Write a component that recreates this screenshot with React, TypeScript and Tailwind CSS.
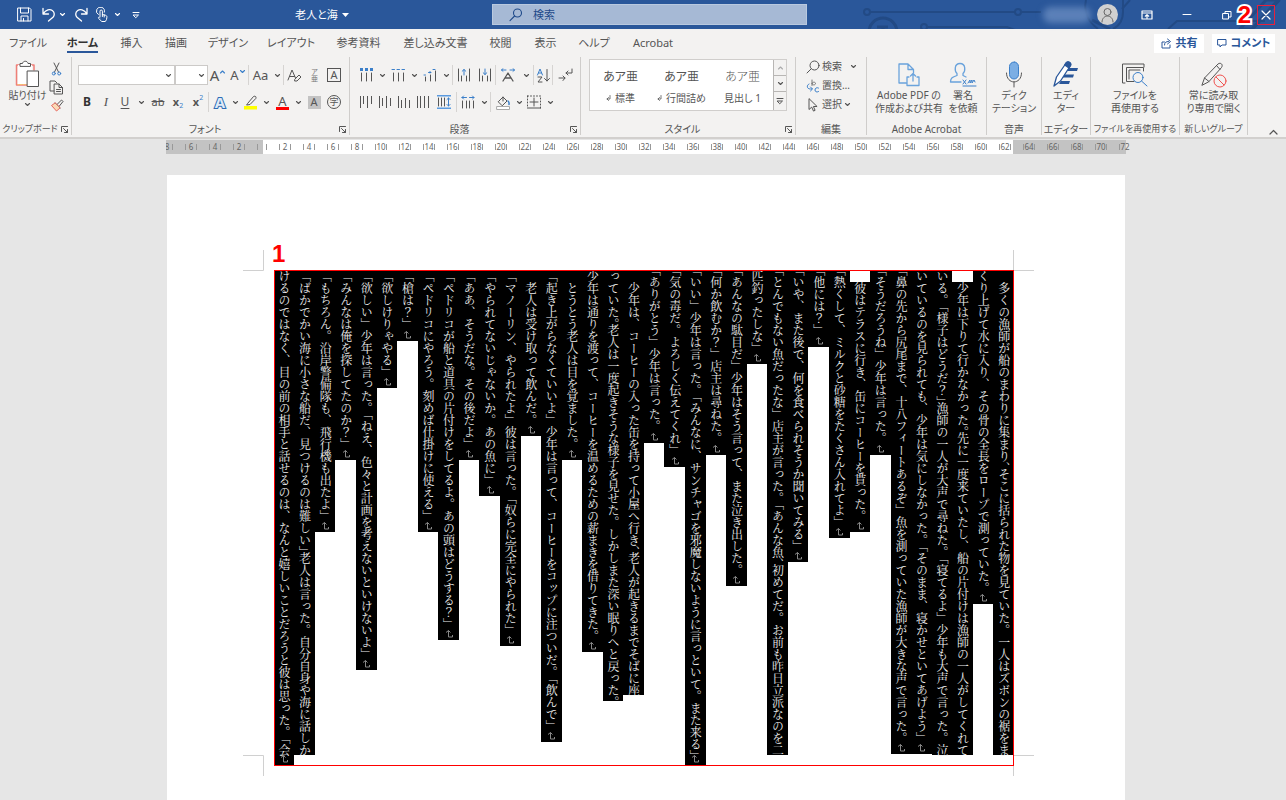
import type { ReactNode } from "react";

type Column = { text: string; end: number; mark?: boolean; gap?: boolean; trim?: boolean };

const TOP = 270;

const columns: Column[] = [
  { text: "　多くの漁師が船のまわりに集まり、~そこに括られた物を見ていた。一人はズボンの裾をま", end: 755 },
  { text: "くり上げて水に入り、その骨の全長をロープで測っていた。", end: 604, mark: true },
  { text: "少年は下りて行かなかった。~先に一度来ていたし、船の片付けは漁師の一人がしてくれて", end: 755, gap: true },
  { text: "いる。「様子はどうだ？」~漁師の一人が大声で尋ねた。「寝てるよ」少年も大声で言った。泣", end: 755 },
  { text: "いているのを見られても、少年は気にしなかった。「そのまま、寝かせといてあげよう」", end: 754, mark: true },
  { text: "「鼻の先から尻尾まで、十八フィートあるぞ」魚を測っていた漁師が大きな声で言った。", end: 754, mark: true, trim: true },
  { text: "「そうだろうね」少年は言った。", end: 455, mark: true, trim: true },
  { text: "彼はテラスに行き、缶にコーヒーを貰った。", end: 532, mark: true, gap: true },
  { text: "「熱くして、ミルクと砂糖をたくさん入れてよ」", end: 538, mark: true, trim: true },
  { text: "「他には？」", end: 347, mark: true, trim: true },
  { text: "「いや、また後で、何を食べられそうか聞いてみる」", end: 562, mark: true, trim: true },
  { text: "「とんでもない魚だったな」店主が言った。「あんな魚、~初めてだ。お前も昨日立派なのを二", end: 755, trim: true },
  { text: "匹釣ったしな」", end: 364, mark: true },
  { text: "「あんなの駄目だ」少年はそう言って、また泣き出した。", end: 586, mark: true, trim: true },
  { text: "「何か飲むか？」店主は尋ねた。", end: 455, mark: true, trim: true },
  { text: "「いい」少年は言った。「みんなに、サンチャゴを邪魔しないように言っといて。また来る」", end: 765, mark: true, trim: true },
  { text: "「気の毒だ。よろしく伝えてくれ」", end: 467, mark: true, trim: true },
  { text: "「ありがとう」少年は言った。", end: 443, mark: true, trim: true },
  { text: "　少年は、コーヒーの入った缶を持って小屋へ行き、~老人が起きるまでそばに座", end: 695 },
  { text: "っていた。~老人は一度起きそうな様子を見せた。しかしまた深い眠りへと戻った。", end: 701 },
  { text: "少年は通りを渡って、コーヒーを温めるための薪まきを借りてきた。", end: 652, mark: true },
  { text: "　とうとう老人は目を覚ました。", end: 460, mark: true },
  { text: "「起き上がらなくていいよ」少年は言って、コーヒーをコップに注ついだ。「飲んで」", end: 742, mark: true },
  { text: "　老人は受け取って飲んだ。", end: 436, mark: true },
  { text: "「マノーリン、やられたよ」彼は言った。「奴らに完全にやられた」", end: 646, mark: true },
  { text: "「やられてないじゃないか。あの魚に」", end: 496, mark: true },
  { text: "「ああ、そうだな。その後だよ」", end: 460, mark: true },
  { text: "「ペドリコが船と道具の片付けをしてるよ。あの頭はどうする？」", end: 640, mark: true },
  { text: "「ペドリコにやろう。刻めば仕掛けに使える」", end: 532, mark: true },
  { text: "「槍は？」", end: 341, mark: true },
  { text: "「欲しけりゃやる」", end: 388, mark: true },
  { text: "「欲しい」少年は言った。「ねえ、色々と計画を考えないといけないよ」", end: 670, mark: true },
  { text: "「みんなは俺を探してたのか？」", end: 460, mark: true },
  { text: "「もちろん。沿岸警備隊も、飛行機も出たよ」", end: 532, mark: true },
  { text: "「ばかでかい海に小さな船だ、見つけるのは難しい」~老人は言った。自分自身や海に話しか", end: 755 },
  { text: "けるのではなく、目の前の相手と話せるのは、なんと嬉しいことだろうと彼は思った。「会", end: 765, mark: true },
];

const tabs = [
  { label: "ファイル", w: "w-[56px]" },
  { label: "ホーム", w: "w-[53px]", active: true },
  { label: "挿入", w: "w-[45px]" },
  { label: "描画", w: "w-[44px]" },
  { label: "デザイン", w: "w-[60px]" },
  { label: "レイアウト", w: "w-[66px]" },
  { label: "参考資料", w: "w-[69px]" },
  { label: "差し込み文書", w: "w-[85px]" },
  { label: "校閲", w: "w-[45px]" },
  { label: "表示", w: "w-[45px]" },
  { label: "ヘルプ", w: "w-[52px]" },
  { label: "Acrobat", w: "w-[66px]" },
];

const rulerNumbers = [8, 6, 4, 2, 0, ...Array.from({ length: 36 }, (_, i) => (i + 1) * 2)];

const INK = "#555";
const BLUE = "#3b7fc9";

function Icon({ w, h, children, color = INK, sw = 1 }: { w: number; h: number; children: ReactNode; color?: string; sw?: number }) {
  return (
    <svg aria-hidden="true" className="shrink-0" width={w} height={h} viewBox={`0 0 ${w} ${h}`} fill="none" stroke={color} strokeWidth={sw} strokeLinecap="round" strokeLinejoin="round">
      {children}
    </svg>
  );
}

function Chevron({ color = INK, up = false }: { color?: string; up?: boolean }) {
  return (
    <Icon w={7} h={5} color={color} sw={1.1}>
      <path d={up ? "M1.5 4 3.5 2l2 2" : "M1.5 1.5l2 2 2-2"} />
    </Icon>
  );
}

function Tool({ label, w, sep, children }: { label: string; w: string; sep?: boolean; children: ReactNode }) {
  return (
    <button type="button" aria-label={label} className={`flex h-5 shrink-0 items-center justify-center ${w} ${sep ? "border-l border-[#d6d4d2]" : ""}`}>
      {children}
    </button>
  );
}

function DropTool({ label, w, iconW, sep, children }: { label: string; w: string; iconW: string; sep?: boolean; children: ReactNode }) {
  return (
    <button type="button" aria-label={label} className={`flex h-5 shrink-0 items-center ${w} ${sep ? "border-l border-[#d6d4d2]" : ""}`}>
      <span className={`flex shrink-0 items-center justify-center ${iconW}`}>{children}</span>
      <span className="flex grow justify-center">
        <Chevron />
      </span>
    </button>
  );
}

function Group({ title, w, launcher, tight, children }: { title: string; w: string; launcher?: boolean; tight?: boolean; children: ReactNode }) {
  return (
    <section aria-label={title} className={`flex shrink-0 flex-col border-r border-[#cfcdcb] ${w}`}>
      <div className="h-0 grow">{children}</div>
      <div className={`flex h-3 items-center leading-3 ${tight ? "text-[9px]" : "text-[10px]"}`}>
        <span className="flex grow basis-0 justify-center whitespace-nowrap">{title}</span>
        {launcher && (
          <button type="button" aria-label={`${title}の詳細`} className="mr-0.5 shrink-0">
            <Icon w={9} h={9}>
              <path d="M1.500 6.500v-5h6M3.500 3.500l4 4M7.500 4.500v3h-3" />
            </Icon>
          </button>
        )}
      </div>
    </section>
  );
}

function BigButton({ lines, w, children }: { lines: string[]; w: string; children: ReactNode }) {
  return (
    <button type="button" className={`flex shrink-0 flex-col items-center ${w}`}>
      <span className="flex h-[30px] items-center justify-center">{children}</span>
      {lines.map((l) => (
        <span key={l} className="text-[10px] leading-[13px] whitespace-nowrap">
          {l}
        </span>
      ))}
    </button>
  );
}

function TitleBar() {
  return (
    <header className="relative grid h-[29px] grid-cols-[492fr_315fr_479fr] items-center bg-[#2a579a] text-white">
      <svg aria-hidden="true" className="absolute top-0 right-0" width="426" height="29" fill="none" stroke="#224a85" strokeWidth="2">
        <circle cx="7" cy="12" r="3" />
        <path d="M10 12h145" />
        <circle cx="158" cy="12" r="3" />
        <path d="M161 12h20" />
        <circle cx="23" cy="32" r="14" strokeWidth="3" />
        <path d="M17 27h11M23 27v3" strokeWidth="3" />
        <circle cx="64" cy="27" r="3" />
        <path d="M67 27h80l8 3M308 29l9-8h88M263 0v12c0 9-4 14-10 17M226 0c-3 14 3 22 12 29M270 0l-8 9M420 0l-26 28" />
        <path d="M232 20l18 9M406 0l12 0-26 29h-12z" strokeWidth="3" />
      </svg>
      <div className="relative flex items-center">
        <button type="button" aria-label="上書き保存" className="ml-[15px] flex w-[18px] justify-center">
          <Icon w={15} h={15} color="#fff">
            <path d="M1 1h11.500l1.500 1.500V14H1zM3.500 1v5h8V1M4 14V9h7v5M6.500 11.500V14" />
          </Icon>
        </button>
        <button type="button" aria-label="元に戻す" className="ml-2 flex items-center gap-[3px]">
          <Icon w={15} h={15} color="#fff" sw={1.3}>
            <path d="M2 1.500V7h5.500M2.200 6.600C5 2.500 9 1.800 11.300 3.500c2.700 2 2.300 5 .7 6.700L7.500 14" />
          </Icon>
          <Chevron color="#fff" />
        </button>
        <button type="button" aria-label="やり直し" className="ml-2 flex">
          <Icon w={15} h={15} color="#fff" sw={1.3}>
            <path d="M13 1.500V7H7.500M12.800 6.600C10 2.500 6 1.800 3.700 3.500 1 5.500 1.400 8.500 3 10.200L7.500 14" />
          </Icon>
        </button>
        <button type="button" aria-label="タッチ/マウス モードの切り替え" className="ml-1.5 flex items-center gap-[5px]">
          <Icon w={14} h={15} color="#fff">
            <path d="M3.300 7.500a4 4 0 1 1 6-2.300M5 9.500V4.200a1.200 1.200 0 0 1 2.400 0v3.300l3 .7c1.200.3 1.600 1 1.500 2l-.4 2.300-1.200 2H6.800L3.500 11.300c-.5-1 .5-1.700 1.500-.8M7.400 7.500v2M9.200 8v2" />
          </Icon>
          <Chevron color="#fff" />
        </button>
        <button type="button" aria-label="クイック アクセス ツール バーのユーザー設定" className="ml-[11px] flex">
          <Icon w={8} h={8} color="#fff">
            <path d="M1 1.500h6M1.500 4h5L4 6.500z" />
          </Icon>
        </button>
        <button type="button" className="ml-[155px] flex items-center gap-1 text-[11px] leading-4 whitespace-nowrap">
          老人と海
          <svg aria-hidden="true" width="7" height="4">
            <path d="M0 0h7L3.500 4z" fill="#fff" />
          </svg>
        </button>
      </div>
      <div className="relative flex h-[21px] items-center gap-2.5 border border-[#b9c9df] bg-[#a6b9d5] pl-4 text-[#1f4a8a]">
        <Icon w={14} h={14} color="#1f4a8a" sw={1.1}>
          <circle cx="8.500" cy="5" r="4" />
          <path d="M5.600 8 1 12.600" />
        </Icon>
        <input type="search" aria-label="検索" placeholder="検索" className="h-full min-w-0 grow bg-transparent text-[11px] leading-4 outline-none placeholder:text-[#1f4a8a]" />
      </div>
      <div className="relative flex items-center justify-end">
        <span className="mr-1.5 h-4 w-12 rounded-full bg-[#5b80b8] blur-[3px]" />
        <span className="mr-[9px] flex size-[21px] items-center justify-center rounded-full bg-[#d0d0d0]">
          <Icon w={15} h={16} color="#666">
            <circle cx="7.500" cy="5" r="3.500" />
            <path d="M2 15c0-8 11-8 11 0" />
          </Icon>
        </span>
        <button type="button" aria-label="リボンの表示オプション" className="flex w-10 justify-center">
          <Icon w={12} h={10} color="#fff" sw={1.2}>
            <path d="M1 1h10v8H1zM1 3h10M6 8V4.800M4.300 6.200 6 4.600l1.700 1.600" />
          </Icon>
        </button>
        <button type="button" aria-label="最小化" className="flex w-10 justify-center">
          <Icon w={10} h={3} color="#fff">
            <path d="M1 1.500h8" />
          </Icon>
        </button>
        <button type="button" aria-label="元に戻す(縮小)" className="relative flex w-[39px] justify-center">
          <Icon w={10} h={10} color="#fff">
            <path d="M1 3.500h5.500V9H1zM3 3.500V1.500h6V7H6.500" />
          </Icon>
        </button>
        <button type="button" aria-label="閉じる" className="flex w-10 justify-center">
          <span className="flex h-5 w-[18px] items-center justify-center border border-[#e8203c]">
            <Icon w={10} h={10} color="#fff" sw={1.2}>
              <path d="M1 1l8 8M9 1 1 9" />
            </Icon>
          </span>
        </button>
        <span className="absolute right-[35px] font-[Liberation_Sans] text-2xl leading-6 font-bold text-[#f00] [paint-order:stroke] [-webkit-text-stroke:4px_white]">2</span>
      </div>
    </header>
  );
}

function TabBar() {
  return (
    <nav aria-label="リボン タブ" className="flex h-7 items-center">
      {tabs.map((t) => (
        <button key={t.label} type="button" className={`flex shrink-0 flex-col items-center text-[11px] leading-4 whitespace-nowrap ${t.w} ${t.active ? "font-bold text-[#333]" : ""}`}>
          <span className={t.active ? "border-b-2 border-[#2a579a] pt-0.5" : ""}>{t.label}</span>
        </button>
      ))}
      <div className="ml-auto flex gap-2 pr-[11px] text-[11px] leading-4 font-bold whitespace-nowrap text-[#2a579a]">
        <button type="button" className="flex h-[19px] w-[50px] items-center justify-center gap-1 bg-white">
          <Icon w={11} h={11} color="#2a579a">
            <path d="M3.500 4H1v6h8V7M3.500 7c0-2.500 1.500-3.500 4-3.500M6.500 1l3 2.500-3 2.500" />
          </Icon>
          共有
        </button>
        <button type="button" className="flex h-[19px] w-[63px] items-center justify-center gap-1 bg-white">
          <Icon w={10} h={10} color="#2a579a">
            <path d="M1 1.500h8V7H5L3 9V7H1z" />
          </Icon>
          コメント
        </button>
      </div>
    </nav>
  );
}

function Bars({ spans }: { spans: number[][] }) {
  return (
    <Icon w={14} h={14}>
      {spans.map(([x, a, b]) => (
        <path key={x} d={`M${x + 0.5} ${a}V${b}`} strokeLinecap="butt" />
      ))}
    </Icon>
  );
}

function ClipboardGroup() {
  return (
    <Group title="クリップボード" w="w-[72px]" launcher tight>
      <div className="flex pt-[3px]">
        <button type="button" className="flex w-[49px] shrink-0 flex-col items-center pl-1.5 text-[10px] leading-[14px] whitespace-nowrap">
          <Icon w={25} h={28}>
            <path d="M4.500 5H1.500v20H12" stroke="#ef7f78" strokeWidth="1.500" />
            <path d="M16 5h3v5" stroke="#ef7f78" strokeWidth="1.500" />
            <path d="M3 5h14v5h-5v14H3z" fill="#fff" stroke="none" />
            <path d="M3 24.500h8" stroke="#f7c46c" strokeDasharray="1 1.500" />
            <path d="M5 6V3.500h2.500c.5-3 5-3 5.500 0h2.500V6z" fill="#fff" />
            <path d="M12.500 11h11v15.500h-11z" fill="#fff" />
          </Icon>
          <span>貼り付け</span>
          <Chevron />
        </button>
        <div className="flex flex-col items-center gap-1 pt-0.5">
          <button type="button" aria-label="切り取り">
            <Icon w={11} h={14}>
              <path d="M3 1l4.500 9M8 1 3.500 10" />
              <circle cx="2.800" cy="11.500" r="1.500" stroke={BLUE} />
              <circle cx="8.200" cy="11.500" r="1.500" stroke={BLUE} />
            </Icon>
          </button>
          <button type="button" aria-label="コピー">
            <Icon w={15} h={15}>
              <path d="M5 11H1V1h5l2 2" />
              <path d="M5.500 4H10l3.500 3.500V14h-8zM10 4v3.500h3.500M7.500 9.500h4M7.500 11.500h4" />
            </Icon>
          </button>
          <button type="button" aria-label="書式のコピー/貼り付け">
            <Icon w={14} h={13}>
              <path d="M7 5.500 11.500 1l1.500 1.500L9 7.500M5 4l5 5" />
              <path d="M5 4 1.500 6.500 6.500 12 10 9z" stroke="#e8675e" fill="#fbd9b5" />
            </Icon>
          </button>
        </div>
      </div>
    </Group>
  );
}

function PickerBox({ label, w }: { label: string; w: string }) {
  return (
    <span className={`relative flex h-5 shrink-0 items-center border border-[#cccac8] bg-white ${w}`}>
      <select aria-label={label} defaultValue="" className="h-full w-full appearance-none bg-transparent text-[10px]">
        <option value="" />
      </select>
      <span className="pointer-events-none absolute right-0.5">
        <Chevron />
      </span>
    </span>
  );
}

function FontGroup() {
  return (
    <Group title="フォント" w="w-[278px]" launcher>
      <div className="flex flex-col gap-[7px] pt-2 pl-1.5 text-[13px] leading-5">
        <div className="flex">
          <PickerBox label="フォント" w="w-[97px]" />
          <PickerBox label="フォント サイズ" w="w-[33px]" />
          <Tool label="フォント サイズの拡大" w="w-5">
            <span className="text-[15px]">A</span>
            <span className="mb-2">
              <Chevron color={BLUE} up />
            </span>
          </Tool>
          <Tool label="フォント サイズの縮小" w="w-5">
            A
            <span className="mb-2">
              <Chevron color={BLUE} />
            </span>
          </Tool>
          <DropTool label="文字種の変換" w="w-[35px]" iconW="w-[23px]" sep>
            Aa
          </DropTool>
          <Tool label="すべての書式をクリア" w="w-[22px]" sep>
            <Icon w={15} h={15}>
              <path d="M1 12 5 2l3.500 8M2.500 8.500h5M8 11l4-4 2 2-4 4H8z" />
            </Icon>
          </Tool>
          <Tool label="ルビ" w="w-[19px]">
            <span className="flex flex-col text-[7px] leading-[7px] text-[#777]">
              <span>ア</span>
              <span>亜</span>
            </span>
          </Tool>
          <Tool label="囲み線" w="w-5">
            <span className="flex size-3.5 items-center justify-center border border-[#555] text-[11px]">A</span>
          </Tool>
        </div>
        <div className="flex">
          <Tool label="太字" w="w-[18px]">
            <b className="text-xs text-[#333]">B</b>
          </Tool>
          <Tool label="斜体" w="w-5">
            <i className="font-[Liberation_Serif]">I</i>
          </Tool>
          <DropTool label="下線" w="w-8" iconW="w-[18px]">
            <span className="text-xs underline underline-offset-2">U</span>
          </DropTool>
          <Tool label="取り消し線" w="w-5">
            <s className="text-[11px]">ab</s>
          </Tool>
          <Tool label="下付き" w="w-5">
            <b className="text-[11px]">x</b>
            <span className="mt-2 text-[7px] text-[#3b7fc9]">2</span>
          </Tool>
          <Tool label="上付き" w="w-5">
            <b className="text-[11px]">x</b>
            <span className="mb-2 text-[7px] text-[#3b7fc9]">2</span>
          </Tool>
          <DropTool label="文字の効果と体裁" w="w-[32px]" iconW="w-[22px]" sep>
            <span className="text-[15px] font-bold text-[#dfeaf7] [paint-order:stroke] [-webkit-text-stroke:2px_#2f6db5]">A</span>
          </DropTool>
          <DropTool label="蛍光ペンの色" w="w-[32px]" iconW="w-[21px]">
            <Icon w={14} h={15}>
              <path d="M4 8l5.500-6.500c2-1 3 .5 2.300 2L6 9.500 3 10z" />
              <path d="M0 11h13v3.500H0z" fill="#ff0" stroke="none" />
            </Icon>
          </DropTool>
          <DropTool label="フォントの色" w="w-[32px]" iconW="w-[21px]">
            <span className="flex h-4 w-[13px] items-center justify-center border-b-3 border-[#f00] text-[13px] leading-3">A</span>
          </DropTool>
          <Tool label="文字の網かけ" w="w-5">
            <span className="flex size-[13px] items-center justify-center bg-[#c3c3c3] text-[11px]">A</span>
          </Tool>
          <Tool label="囲い文字" w="w-5">
            <span className="flex size-3.5 items-center justify-center rounded-full border border-[#555] text-[9px]">字</span>
          </Tool>
        </div>
      </div>
    </Group>
  );
}

function ParagraphGroup() {
  return (
    <Group title="段落" w="w-[231px]" launcher>
      <div className="flex flex-col gap-[7px] pt-2 pl-1.5">
        <div className="flex">
          <DropTool label="箇条書き" w="w-8" iconW="w-5">
            <Icon w={14} h={14}>
              <path d="M2.500 5v8M7.500 5v8M12.500 5v8" />
              <path d="M1 0h3v3H1zM6 0h3v3H6zM11 0h3v3h-3z" fill={BLUE} stroke="none" />
            </Icon>
          </DropTool>
          <DropTool label="段落番号" w="w-8" iconW="w-5">
            <Icon w={14} h={14}>
              <path d="M2.500 5v8M7.500 5v8M12.500 5v8" />
              <path d="M1 1.500h2.500M6 1.500h2.500M11 1.500h2.500" stroke={BLUE} />
            </Icon>
          </DropTool>
          <DropTool label="アウトライン" w="w-8" iconW="w-5">
            <Icon w={14} h={14}>
              <path d="M2.500 9v4M7.500 7v6M12.500 3v10" />
              <path d="M1 7h1.500M5.500 4.500H8M7 3.500v1.500M10 1.500h2" stroke={BLUE} />
            </Icon>
          </DropTool>
          <Tool label="インデントを減らす" w="w-[22px]" sep>
            <Icon w={14} h={14}>
              <path d="M1.500 1v12M12.500 1v12M4.500 8v5M9.500 8v5" />
              <path d="M7 7V1.500M5.200 3.200 7 1.500l1.800 1.700" stroke={BLUE} />
            </Icon>
          </Tool>
          <Tool label="インデントを増やす" w="w-[21px]">
            <Icon w={14} h={14}>
              <path d="M1.500 1v12M12.500 1v12M4.500 8v5M9.500 8v5" />
              <path d="M7 1v5.500M5.200 4.800 7 6.500l1.800-1.700" stroke={BLUE} />
            </Icon>
          </Tool>
          <DropTool label="拡張書式" w="w-[38px]" iconW="w-6" sep>
            <Icon w={16} h={14}>
              <path d="M3 13 8 5l5 8M5 10h6" strokeWidth="1.300" />
              <path d="M6 2H1.500M3 .7 1.500 2 3 3.300M10 2h4.500M13 .7 14.500 2 13 3.300" stroke={BLUE} />
            </Icon>
          </DropTool>
          <Tool label="並べ替え" w="w-[19px]" sep>
            <Icon w={15} h={15}>
              <path d="M1.500 7 4 1l2.500 6M2.500 5h3" stroke={BLUE} />
              <path d="M2 9h4L2 14h4M11 1.500V13M8.500 10.500 11 13l2.500-2.500" />
            </Icon>
          </Tool>
          <Tool label="編集記号の表示/非表示" w="w-[25px]" sep>
            <Icon w={15} h={14}>
              <path d="M14 1v4H8M10 3 8 5l2 2M1 10h6M5 8l2 2-2 2.500" />
            </Icon>
          </Tool>
        </div>
        <div className="flex">
          <Tool label="上揃え" w="w-[19px]">
            <Bars spans={[[1, 1, 13], [4, 1, 9], [8, 1, 13], [12, 1, 9]]} />
          </Tool>
          <Tool label="上下中央揃え" w="w-[19px]">
            <Bars spans={[[1, 1, 13], [4, 3, 11], [8, 1, 13], [12, 3, 11]]} />
          </Tool>
          <Tool label="下揃え" w="w-[19px]">
            <Bars spans={[[1, 1, 13], [4, 5, 13], [8, 3, 13], [12, 5, 13]]} />
          </Tool>
          <Tool label="両端揃え" w="w-[19px]">
            <Bars spans={[[1, 1, 13], [4, 1, 13], [8, 1, 13], [12, 1, 13]]} />
          </Tool>
          <Tool label="均等割り付け" w="w-6">
            <Icon w={14} h={14}>
              <path d="M0 .8h14M0 13.200h14" stroke="#5b9be0" strokeWidth="1.500" />
              <path d="M1.500 3v8M4.500 3v8M7.500 3v8" />
              <path d="M11.500 3v8M10 4.500 11.500 3 13 4.500M10 9.500l1.500 1.500 1.500-1.500" stroke={BLUE} />
            </Icon>
          </Tool>
          <DropTool label="行と段落の間隔" w="w-[34px]" iconW="w-[22px]" sep>
            <Icon w={14} h={14}>
              <path d="M1.500 6v7M5.500 6v7M8.500 6v7M12.500 6v7" />
              <path d="M1 2.500h4.500M2.500 1 1 2.500 2.500 4M13 2.500H8.500M11.500 1 13 2.500 11.500 4" stroke={BLUE} />
            </Icon>
          </DropTool>
          <DropTool label="塗りつぶし" w="w-[34px]" iconW="w-[24px]" sep>
            <Icon w={15} h={15}>
              <path d="M2.500 6.500 7 2l4 4-4.500 4.500zM7 2v4" />
              <path d="M12 6c1.500 1 1 2.500 1 3.500" stroke={BLUE} strokeWidth="1.500" />
              <path d="M1 11.500h12.500v3H1z" fill="#fff" stroke="#aaa" />
            </Icon>
          </DropTool>
          <DropTool label="罫線" w="w-8" iconW="w-5">
            <Icon w={14} h={14}>
              <path d="M.5 1h13v12M.5 1v12" strokeDasharray="1 2" />
              <path d="M0 13h14M7 3v8M3 7h8" />
            </Icon>
          </DropTool>
        </div>
      </div>
    </Group>
  );
}

function StyleGroup() {
  const styles = [
    { name: "標準", mark: true, light: false },
    { name: "行間詰め", mark: true, light: false },
    { name: "見出し 1", mark: false, light: true },
  ];
  return (
    <Group title="スタイル" w="w-[215px]" launcher>
      <div className="mx-2 mt-0.5 flex h-[52px] border border-[#d0cecc] bg-white">
        {styles.map((s) => (
          <button key={s.name} type="button" className="flex grow basis-0 flex-col items-center justify-center gap-1.5 pt-1 whitespace-nowrap">
            <span className={`text-xs leading-4 ${s.light ? "font-light" : ""}`}>あア亜</span>
            <span className="flex items-center gap-1 text-[10px] leading-[14px]">
              {s.mark && (
                <Icon w={5} h={6}>
                  <path d="M4 .5V4H1M2.500 2.500 1 4l1.500 1.500" strokeWidth=".8" />
                </Icon>
              )}
              {s.name}
            </span>
          </button>
        ))}
        <div className="flex w-[13px] shrink-0 flex-col divide-y divide-[#b8b6b4] border-l border-[#b8b6b4] bg-[#f3f2f1]">
          <button type="button" aria-label="前の行" className="flex grow items-center justify-center">
            <Chevron color="#aaa" up />
          </button>
          <button type="button" aria-label="次の行" className="flex grow items-center justify-center">
            <Chevron />
          </button>
          <button type="button" aria-label="その他" className="flex grow items-center justify-center">
            <Icon w={8} h={8}>
              <path d="M1 1.500h6M1.500 4h5L4 6.500z" />
            </Icon>
          </button>
        </div>
      </div>
    </Group>
  );
}

function EditGroup() {
  return (
    <Group title="編集" w="w-[71px]">
      <div className="flex flex-col pl-2.5 text-[10px] leading-[19px] whitespace-nowrap">
        <button type="button" className="flex items-center gap-0.5">
          <Icon w={14} h={14}>
            <circle cx="8.500" cy="5.500" r="4.500" />
            <path d="M5.200 8.800 1 13" />
          </Icon>
          検索
          <span className="ml-1.5">
            <Chevron />
          </span>
        </button>
        <button type="button" className="flex items-center gap-0.5">
          <Icon w={14} h={14}>
            <path d="M6 1v5.500M6 4.500c0-1.800 3.500-1.800 3.500 0s-3.500 2-3.500 0" stroke="#777" />
            <path d="M3 5C.5 6 .5 10 4.500 10H6M4.500 8 6.500 10l-2 2M12.500 9c-2-1-3.500.3-3.500 2s1.500 2.600 3.500 1.600" stroke={BLUE} />
          </Icon>
          置換…
        </button>
        <button type="button" className="flex items-center gap-0.5">
          <Icon w={14} h={14}>
            <path d="M3 1v10.500l2.700-2.400 1.800 4 1.600-.8-1.700-3.800h3.300z" />
          </Icon>
          選択
          <Chevron />
        </button>
      </div>
    </Group>
  );
}

function Ribbon() {
  return (
    <div className="flex h-20 items-stretch pb-0.5">
      <ClipboardGroup />
      <FontGroup />
      <ParagraphGroup />
      <StyleGroup />
      <EditGroup />
      <Group title="Adobe Acrobat" w="w-[120px]">
        <div className="flex pt-0.5 pl-1.5">
          <BigButton lines={["Adobe PDF の", "作成および共有"]} w="w-[72px]">
            <Icon w={24} h={25} color="#6aa3dc" sw={1.3}>
              <path d="M9 21H2V2h9l5.500 5.500V11M11 2v5.500h5.500M12 15h-2v8.500h12V15h-2M16 19v-7M13.500 14 16 11.500l2.500 2.500" />
            </Icon>
          </BigButton>
          <BigButton lines={["署名", "を依頼"]} w="w-9">
            <Icon w={28} h={25} color="#6aa3dc" sw={1.3}>
              <path d="M12 20H1.500c0-4 2-5 6.500-6.500v-2C5.500 9 5 1.500 11 1.500S16.500 9 14 11.500v2l3 1.500" />
              <path d="M14 18l3 4M17 18l-3 4M19 21l2-3v3l2-3v3l2-3 1 2M14 24h13" stroke={BLUE} strokeWidth="1" />
            </Icon>
          </BigButton>
        </div>
      </Group>
      <Group title="音声" w="w-[55px]">
        <div className="flex justify-center pt-0.5">
          <BigButton lines={["ディク", "テーション"]} w="w-[52px]">
            <Icon w={18} h={27}>
              <rect x="4.500" y="1" width="9" height="17" rx="4.500" fill="#7baee4" stroke={BLUE} />
              <path d="M1.500 12c0 12 15 12 15 0M9 21v5" />
            </Icon>
          </BigButton>
        </div>
      </Group>
      <Group title="エディター" w="w-[49px]">
        <div className="flex justify-center pt-0.5">
          <BigButton lines={["エディ", "ター"]} w="w-11">
            <Icon w={28} h={27} color="#2a579a" sw={1.3}>
              <path d="M15 7h11l-1 3H13zM12 13.500h10l-1 3H10zM9 20h9l-1 3H7z" fill="#2a579a" stroke="none" />
              <path d="M2 25l2.500-9L14.500 1.500c2-1.500 5 .5 4 3L8.500 20z" fill="#fff" />
              <path d="M14.500 1.500c2-1.500 5 .5 4 3L17 7l-4.300-3z" fill="#2a579a" />
            </Icon>
          </BigButton>
        </div>
      </Group>
      <Group title="ファイルを再使用する" w="w-[89px]" tight>
        <div className="flex justify-center pt-0.5">
          <BigButton lines={["ファイルを", "再使用する"]} w="w-20">
            <Icon w={28} h={25}>
              <path d="M4 21H1.500V2H23v3" />
              <path d="M13 19.500H5.500V5.500h17V9M8 17V8h11" />
              <circle cx="17" cy="15.500" r="5" stroke={BLUE} fill="#f3f2f1" />
              <path d="M20.500 19 26 24" stroke={BLUE} />
            </Icon>
          </BigButton>
        </div>
      </Group>
      <Group title="新しいグループ" w="w-[68px]" tight>
        <div className="flex justify-center pt-0.5">
          <BigButton lines={["常に読み取", "り専用で開く"]} w="w-16">
            <Icon w={28} h={27}>
              <path d="M2 24l2.500-7L18 3c2.500-2 5.500.5 3.500 3.500L9 20.500zM16.500 4.500l3.500 4M4.500 17 9 20.500" />
              <circle cx="20" cy="20" r="6" stroke="#f0524f" fill="#f3f2f1" />
              <path d="M16 16l8 8" stroke="#f0524f" />
            </Icon>
          </BigButton>
        </div>
      </Group>
      <button type="button" aria-label="リボンを折りたたむ" className="mt-auto mr-2 ml-auto">
        <Icon w={9} h={6} sw={1.2}>
          <path d="M1 5l3.500-3.500L8 5" />
        </Icon>
      </button>
    </div>
  );
}

function Ruler() {
  return (
    <div className="mx-auto flex h-3.5 w-[960px] shrink-0 bg-[linear-gradient(90deg,#c3c3c3_0_97px,#fff_97px_847px,#c3c3c3_847px)] [clip-path:inset(0_-4px_0_0)]">
      <div className="-ml-[11px] flex w-[981px] shrink-0 items-center text-[8px] leading-3 text-[#666]">
        {rulerNumbers.map((n, i) => (
          <span key={i} className="flex grow basis-0 items-center justify-between px-1.5">
            <span className="h-1.5 w-px bg-[#999]" />
            {n > 0 && <span className="flex w-2.5 shrink-0 justify-center">{n}</span>}
            {n < 72 && <span className="h-1.5 w-px bg-[#999]" />}
          </span>
        ))}
      </div>
    </div>
  );
}

function ColumnText({ text }: { text: string }) {
  const parts = text.split("~");
  return (
    <>
      {parts.map((part, i) =>
        i < parts.length - 1 ? (
          <span key={i}>
            {part.slice(0, -1)}
            <span className="[font-feature-settings:'vhal']">{part.slice(-1)}</span>
          </span>
        ) : (
          <span key={i}>{part}</span>
        ),
      )}
    </>
  );
}

function Page() {
  return (
    <main className="mx-auto w-[958px] shrink-0 bg-white pt-[95px] pr-[111px] pb-8 pl-[107px]">
      <div className="relative">
        <svg aria-hidden="true" className="absolute -top-5 -left-[31px]" width="791" height="527" fill="none" stroke="#d0d0d0">
          <path d="M0 20.500h20.500V0M791 20.500h-21M770.500 20V0M0 505.500h20.500V526M791 505.500h-20.500V526" />
        </svg>
        <span className="absolute -top-7 -left-0.5 font-[Liberation_Sans] text-2xl leading-6 font-bold text-[#f00]">1</span>
        <div className="relative flex h-[496px] flex-row-reverse items-start bg-white font-['Noto_Serif_CJK_JP','Noto_Sans_CJK_JP',serif] text-xs text-[#eee] outline outline-[#f00] -outline-offset-1">
          {columns.map((c, i) => (
            <div key={i} className={`flex grow basis-0 flex-col items-center justify-between bg-black ${c.gap ? "mt-3" : ""}`} style={{ height: c.end - TOP - (c.gap ? 12 : 0) }}>
              <p className={`h-0 whitespace-nowrap [font-feature-settings:normal] [writing-mode:vertical-rl] ${c.trim ? "[text-spacing-trim:trim-start]" : "[text-spacing-trim:space-first]"}`}>
                <ColumnText text={c.text} />
              </p>
              {c.mark && (
                <svg aria-hidden="true" className="mb-0.5 shrink-0" width="8" height="9" fill="none" stroke="#888">
                  <path d="M3.500 8V1.500M1 3.500l2.500-2 2 2M3.500 8H7.500V6" />
                </svg>
              )}
            </div>
          ))}
        </div>
      </div>
    </main>
  );
}

export default function App() {
  return (
    <div className="flex h-screen flex-col overflow-hidden bg-[#e6e6e6] font-['Noto_Sans','Noto_Sans_CJK_JP',sans-serif] text-[#555] [font-feature-settings:'palt']">
      <TitleBar />
      <div className="shrink-0 border-b-2 border-[#d2d0ce] bg-[#f3f2f1]">
        <TabBar />
        <Ribbon />
      </div>
      <div className="flex min-h-0 grow flex-col pt-px pl-[6px]">
        <Ruler />
        <div className="flex min-h-0 grow pt-[21px]">
          <Page />
        </div>
      </div>
    </div>
  );
}
